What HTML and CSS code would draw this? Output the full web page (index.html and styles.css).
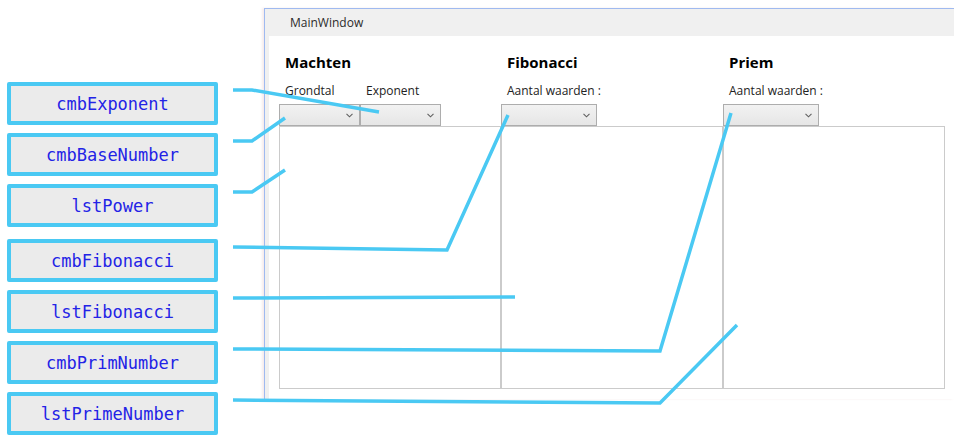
FILE: index.html
```html
<!DOCTYPE html>
<html lang="nl">
<head>
<meta charset="utf-8">
<title>MainWindow</title>
<link rel="stylesheet" href="styles.css">
</head>
<body>
<div class="page">
  <div class="labels">
    <div class="tag">cmbExponent</div>
    <div class="tag">cmbBaseNumber</div>
    <div class="tag">lstPower</div>
    <div class="tag spaced">cmbFibonacci</div>
    <div class="tag">lstFibonacci</div>
    <div class="tag">cmbPrimNumber</div>
    <div class="tag">lstPrimeNumber</div>
  </div>
  <div class="window">
    <div class="titlebar">MainWindow</div>
    <div class="client">
      <div class="col">
        <div class="heading">Machten</div>
        <div class="row">
          <div class="lbl w81">Grondtal</div>
          <div class="lbl w81">Exponent</div>
        </div>
        <div class="row">
          <div class="combo w81"><svg class="chev" width="7" height="5" viewBox="0 0 7 5"><polyline points="0.5,0.8 3.5,3.8 6.5,0.8"/></svg></div>
          <div class="combo w81"><svg class="chev" width="7" height="5" viewBox="0 0 7 5"><polyline points="0.5,0.8 3.5,3.8 6.5,0.8"/></svg></div>
        </div>
        <div class="list"></div>
      </div>
      <div class="col">
        <div class="heading">Fibonacci</div>
        <div class="row">
          <div class="lbl">Aantal waarden :</div>
        </div>
        <div class="row">
          <div class="combo w96"><svg class="chev" width="7" height="5" viewBox="0 0 7 5"><polyline points="0.5,0.8 3.5,3.8 6.5,0.8"/></svg></div>
        </div>
        <div class="list"></div>
      </div>
      <div class="col">
        <div class="heading">Priem</div>
        <div class="row">
          <div class="lbl">Aantal waarden :</div>
        </div>
        <div class="row">
          <div class="combo w96"><svg class="chev" width="7" height="5" viewBox="0 0 7 5"><polyline points="0.5,0.8 3.5,3.8 6.5,0.8"/></svg></div>
        </div>
        <div class="list"></div>
      </div>
    </div>
  </div>
</div>
<svg class="connectors" width="966" height="445" viewBox="0 0 966 445">
  <polyline points="233,90 252,90 379,112"/>
  <polyline points="233,141 252,141 285,118"/>
  <polyline points="233,192 252,192 285,170"/>
  <polyline points="233,247 447,250 508,115"/>
  <polyline points="233,298 515,297"/>
  <polyline points="233,349 660,351 731,113"/>
  <polyline points="233,400 660,403 737,325"/>
</svg>
</body>
</html>
```
FILE: styles.css
```css
html, body {
  margin: 0;
  padding: 0;
  background: #ffffff;
}

body {
  position: relative;
  width: 966px;
  height: 445px;
  overflow: hidden;
  font-family: "Open Sans", "Noto Sans", sans-serif;
}

.page {
  display: flex;
  align-items: flex-start;
  padding-left: 7px;
}

.labels {
  display: flex;
  flex-direction: column;
  gap: 8px;
  margin-top: 82px;
}

.tag {
  box-sizing: border-box;
  width: 211px;
  height: 43px;
  border: 4px solid #4ac9f3;
  border-radius: 2px;
  background: #ebebeb;
  display: flex;
  align-items: center;
  justify-content: center;
  font-family: "DejaVu Sans Mono", "Liberation Mono", monospace;
  font-size: 17px;
  color: #2323e6;
}

.tag.spaced {
  margin-top: 4px;
}

.window {
  box-sizing: border-box;
  margin-top: 8px;
  margin-left: 46px;
  width: 690px;
  height: 391px;
  background: #f0f0f0;
  border-top: 1px solid #9fbaf0;
  border-left: 1px solid #9fbaf0;
  box-shadow: -2px 0 2px rgba(230, 200, 200, 0.35);
  display: flex;
  flex-direction: column;
  padding-left: 4px;
}

.titlebar {
  height: 27px;
  line-height: 27px;
  padding-left: 25px;
  font-size: 12px;
  color: #2b2b2b;
  margin-left: -4px;
}

.client {
  flex: 1;
  background: #ffffff;
  display: flex;
  padding-left: 10px;
  padding-top: 16px;
}

.col {
  width: 222px;
  display: flex;
  flex-direction: column;
}

.heading {
  padding-left: 6px;
  height: 20px;
  line-height: 20px;
  font-size: 15px;
  font-weight: 700;
  color: #000;
}

.row {
  display: flex;
}

.row + .row {
  margin-top: 5px;
}

.heading + .row {
  margin-top: 11px;
}

.lbl {
  box-sizing: border-box;
  padding-left: 6px;
  height: 16px;
  line-height: 16px;
  font-size: 12px;
  color: #222;
  white-space: nowrap;
}

.w81 { width: 81px; }
.w96 { width: 96px; }

.combo {
  box-sizing: border-box;
  height: 22px;
  border: 1px solid #adadad;
  background: linear-gradient(#f2f2f2, #e6e6e6);
  display: flex;
  align-items: center;
  justify-content: flex-end;
  padding-right: 6px;
}

.chev polyline {
  fill: none;
  stroke: #606060;
  stroke-width: 1.1;
}

.list {
  box-sizing: border-box;
  height: 263px;
  border: 1px solid #cbcbcb;
  background: #fff;
}

.connectors {
  position: absolute;
  left: 0;
  top: 0;
  pointer-events: none;
}

.connectors polyline {
  fill: none;
  stroke: #4ac9f3;
  stroke-width: 3.5;
  stroke-linejoin: miter;
}
```
